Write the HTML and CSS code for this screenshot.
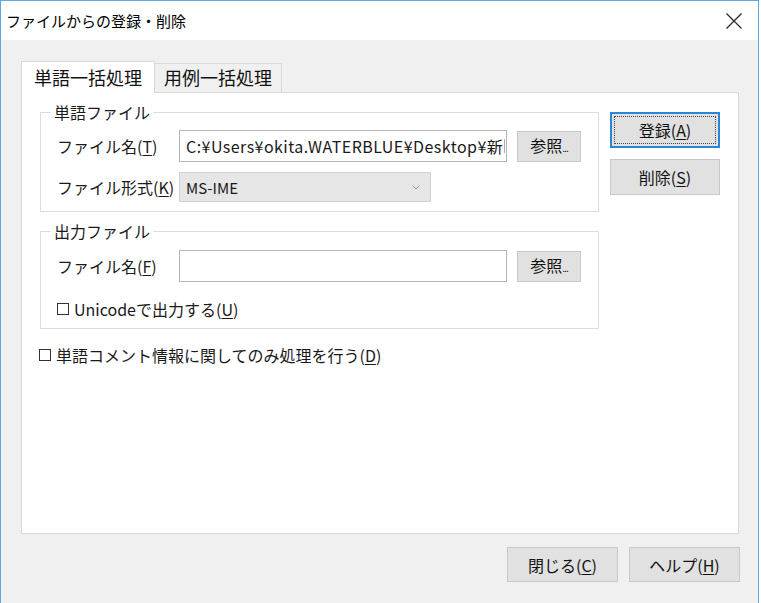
FILE: index.html
```html
<!DOCTYPE html>
<html lang="ja">
<head>
<meta charset="utf-8">
<title>ファイルからの登録・削除</title>
<link rel="stylesheet" href="styles.css">
</head>
<body>
<div class="window">
  <div class="titlebar">
    <span class="title">ファイルからの登録・削除</span>
    <span class="close">
      <svg width="18" height="18" viewBox="0 0 18 18"><path d="M1.5 1.5 L16.5 16.5 M16.5 1.5 L1.5 16.5" stroke="#2b2b2b" stroke-width="1.3" fill="none"/></svg>
    </span>
  </div>
  <div class="body">
    <div class="tabs">
      <div class="tab active">単語一括処理</div>
      <div class="tab">用例一括処理</div>
    </div>
    <div class="panel">
      <div class="panel-main">
        <div class="groups">
          <fieldset class="group">
            <legend>単語ファイル</legend>
            <div class="row">
              <span class="lbl">ファイル名(<u>T</u>)</span>
              <div class="input"><span class="val">C:¥Users¥okita.WATERBLUE¥Desktop¥新</span><span class="caret"></span></div>
              <button class="btn browse">参照<span class="dots">...</span></button>
            </div>
            <div class="row row2">
              <span class="lbl">ファイル形式(<u>K</u>)</span>
              <div class="combo"><span>MS-IME</span>
                <svg class="arrow" width="8" height="5" viewBox="0 0 8 5"><path d="M0.5 0.5 L4 4 L7.5 0.5" stroke="#9a9a9a" stroke-width="1" fill="none"/></svg>
              </div>
            </div>
          </fieldset>
          <fieldset class="group group2">
            <legend>出力ファイル</legend>
            <div class="row">
              <span class="lbl">ファイル名(<u>F</u>)</span>
              <div class="input"></div>
              <button class="btn browse">参照<span class="dots">...</span></button>
            </div>
            <div class="check inner">
              <span class="box"></span><span>Unicodeで出力する(<u>U</u>)</span>
            </div>
          </fieldset>
        </div>
        <div class="side">
          <button class="btn big default">登録(<u>A</u>)</button>
          <button class="btn big">削除(<u>S</u>)</button>
        </div>
      </div>
      <div class="check outer">
        <span class="box"></span><span>単語コメント情報に関してのみ処理を行う(<u>D</u>)</span>
      </div>
    </div>
    <div class="footer">
      <button class="btn big">閉じる(<u>C</u>)</button>
      <button class="btn big">ヘルプ(<u>H</u>)</button>
    </div>
  </div>
</div>
</body>
</html>
```

FILE: styles.css
```css
* { box-sizing: border-box; }
html, body { margin: 0; padding: 0; background: #ffffff; }
body {
  font-family: "Noto Sans CJK JP", "Noto Sans", sans-serif;
  color: #1a1a1a;
  font-size: 16px;
}
.window {
  width: 759px;
  height: 603px;
  border: 1px solid #5ea8df;
  border-bottom: 0;
  background: #f0f0f0;
  display: flex;
  flex-direction: column;
}
.titlebar {
  height: 39px;
  background: #ffffff;
  display: flex;
  align-items: center;
  padding-left: 5px;
  flex: none;
}
.title { font-size: 15px; color: #000; line-height: 20px; }
.close { margin-left: auto; margin-right: 15px; display: flex; }
.body {
  flex: 1;
  padding: 21px 0 0 20px;
  display: flex;
  flex-direction: column;
}
.tabs {
  display: flex;
  align-items: flex-end;
  height: 31px;
}
.tab {
  font-size: 18px;
  line-height: 26px;
  height: 29px;
  width: 127px;
  text-align: center;
  background: #f0f0f0;
  border: 1px solid #d9d9d9;
  border-left: 0;
  border-bottom: 0;
  color: #111;
}
.tab.active {
  width: 134px;
  height: 32px;
  line-height: 30px;
  background: #ffffff;
  border-left: 1px solid #d9d9d9;
  position: relative;
  z-index: 1;
  margin-bottom: -1px;
}
.panel {
  width: 718px;
  height: 442px;
  background: #ffffff;
  border: 1px solid #d9d9d9;
  padding: 9px 18px 0 18px;
}
.panel-main { display: flex; }
.groups { width: 560px; display: flex; flex-direction: column; }
.group {
  margin: 0;
  border: 1px solid #dcdcdc;
  padding: 8px 0 9px 10px;
  min-width: 0;
}
.group legend {
  font-size: 16px;
  line-height: 20px;
  padding: 0 3px;
}
.group2 { margin-top: 9px; padding-top: 9px; }
.row {
  display: flex;
  align-items: center;
  height: 32px;
  padding-left: 6px;
}
.row2 { margin-top: 10px; height: 30px; }
.lbl { width: 122px; flex: none; white-space: nowrap; line-height: 20px; }
.input {
  width: 328px;
  height: 32px;
  border: 1px solid #b4b4b4;
  background: #fff;
  overflow: hidden;
  white-space: nowrap;
  padding: 0 0 0 6px;
  display: flex;
  align-items: center;
  font-size: 16px;
}
.val { letter-spacing: 0.45px; }
.caret {
  width: 1px;
  height: 14px;
  background: #c9a0a0;
  margin-left: 1px;
}
.btn {
  font-family: inherit;
  font-size: 16px;
  color: #111;
  background: #e1e1e1;
  border: 1px solid #c8c8c8;
  padding: 0;
  margin: 0;
  line-height: 20px;
}
.browse {
  margin-left: 10px;
  width: 64px;
  height: 31px;
}
.dots { font-size: 10px; letter-spacing: -1px; }
.combo {
  width: 252px;
  height: 30px;
  background: #e6e6e6;
  border: 1px solid #d2d2d2;
  display: flex;
  align-items: center;
  padding: 0 10px 0 6px;
  font-size: 15px;
}
.combo .arrow { margin-left: auto; }
.side {
  margin-left: 11px;
  margin-top: 10px;
  width: 110px;
  display: flex;
  flex-direction: column;
  gap: 11px;
}
.big { width: 110px; height: 36px; }
.default {
  border: 1px solid #2c86d6;
  box-shadow: inset 0 0 0 1px #2c86d6;
  outline: 1px dotted #444;
  outline-offset: -5px;
}
.check {
  display: flex;
  align-items: center;
  height: 20px;
  line-height: 20px;
}
.check .box {
  width: 12px;
  height: 12px;
  border: 1px solid #333;
  background: #fff;
  margin-right: 5px;
  flex: none;
}
.check.inner { margin-top: 17px; padding-left: 6px; }
.check.outer { margin-top: 16px; margin-left: -1px; }
.footer {
  display: flex;
  justify-content: flex-end;
  gap: 11px;
  margin-top: 13px;
  padding-right: 18px;
}
.footer .big { width: 111px; height: 35px; }
u { text-decoration: underline; text-underline-offset: 2px; }
```
